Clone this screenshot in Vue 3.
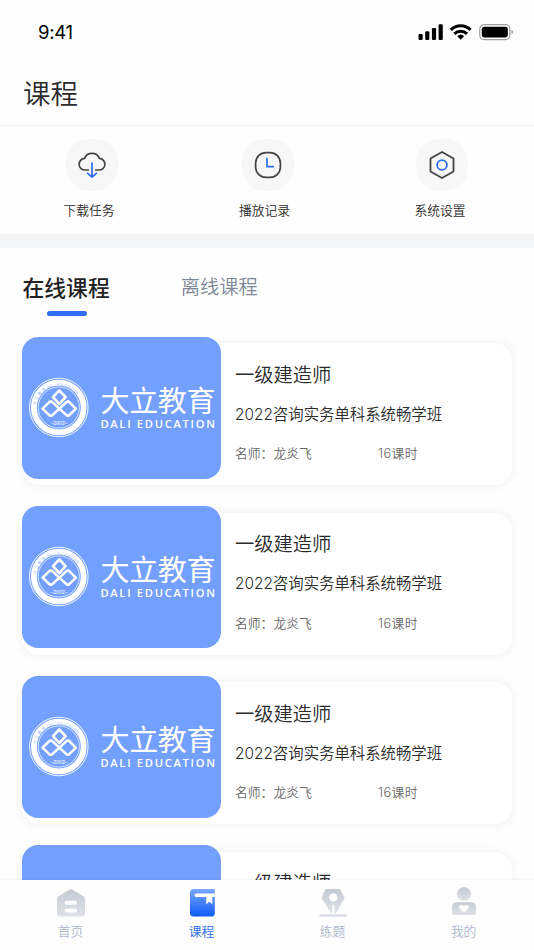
<script setup>
import { ref } from 'vue';

const activeTab = ref('online');
const activeNav = ref('course');

const actions = [
  { key: 'download', label: '下载任务' },
  { key: 'history', label: '播放记录' },
  { key: 'settings', label: '系统设置' },
];

const tabs = [
  { key: 'online', label: '在线课程' },
  { key: 'offline', label: '离线课程' },
];

const courses = Array.from({ length: 4 }, (_, i) => ({
  id: i + 1,
  title: '一级建造师',
  name: '2022咨询实务单科系统畅学班',
  teacher: '龙炎飞',
  hours: 16,
}));

const navItems = [
  { key: 'home', label: '首页' },
  { key: 'course', label: '课程' },
  { key: 'practice', label: '练题' },
  { key: 'mine', label: '我的' },
];
</script>

<template>
  <div class="page">
    <div class="status-bar">
      <span class="time">9:41</span>
      <svg class="status-icons" width="96" height="18" viewBox="0 0 96 18">
        <rect x="0.5" y="11" width="4.2" height="6" rx="1.2" />
        <rect x="7.2" y="8.3" width="4.2" height="8.7" rx="1.2" />
        <rect x="13.9" y="5" width="4.2" height="12" rx="1.2" />
        <rect x="20.6" y="1.3" width="4.2" height="15.7" rx="1.2" />
        <g fill="none" stroke="#000" stroke-width="3.1">
          <path d="M32.8 6.9a14 14 0 0 1 19.8 0" />
          <path d="M36.4 10.8a9 9 0 0 1 12.6 0" />
        </g>
        <path d="M39.3 13.2a5 5 0 0 1 6.8 0l-3.4 3.5z" />
        <rect x="61.8" y="1.7" width="30" height="14.9" rx="4.3" fill="none" stroke="#a0a0a0" stroke-width="1.2" />
        <rect x="63.8" y="3.8" width="26" height="10.6" rx="2.4" />
        <path d="M93.4 6.8c2.3.8 2.3 3.9 0 4.7z" fill="#a0a0a0" />
      </svg>
    </div>

    <header class="header">
      <h1>课程</h1>
    </header>

    <section class="actions">
      <div v-for="item in actions" :key="item.key" class="action" :class="item.key">
        <div class="action-icon">
          <svg v-if="item.key === 'download'" width="30" height="30" viewBox="0 0 30 30" fill="none" stroke-width="1.7" stroke-linecap="round" stroke-linejoin="round">
            <path d="M11.3 20H8.2A5.6 5.6 0 0 1 7.6 8.4A8 8 0 0 1 22.4 8.4A5.6 5.6 0 0 1 21.8 20H18.7" stroke="#444" />
            <path d="M15 13V27M10.6 23.3L15 27l4.4-3.7" stroke="#2f6cf6" />
          </svg>
          <svg v-else-if="item.key === 'history'" width="30" height="30" viewBox="0 0 30 30" fill="none" stroke-width="1.7">
            <rect x="2.6" y="2.6" width="24.8" height="24.8" rx="10.5" stroke="#444" />
            <path d="M14 7.8V16.7H21" stroke="#2f6cf6" />
          </svg>
          <svg v-else width="30" height="30" viewBox="0 0 30 30" fill="none" stroke-width="1.8" stroke-linejoin="round">
            <path d="M15 2L26.5 8.5V21.5L15 28L3.5 21.5V8.5Z" stroke="#444" />
            <circle cx="15" cy="15" r="4.9" stroke="#2f6cf6" />
          </svg>
        </div>
        <span class="action-label">{{ item.label }}</span>
      </div>
    </section>

    <div class="divider"></div>

    <div class="tabs">
      <div
        v-for="tab in tabs"
        :key="tab.key"
        class="tab"
        :class="{ active: activeTab === tab.key }"
        @click="activeTab = tab.key"
      >
        {{ tab.label }}
      </div>
    </div>

    <main class="course-list">
      <article v-for="course in courses" :key="course.id" class="course-card">
        <div class="cover">
          <svg width="198" height="142" viewBox="0 0 198 142">
            <g fill="none" stroke="#fff">
              <circle cx="36.8" cy="70.5" r="29.3" stroke-width="0.9" />
              <circle cx="36.8" cy="70.5" r="24.9" stroke-width="5.8" />
              <circle cx="36.8" cy="70.5" r="20.6" stroke-width="0.7" />
              <g stroke-width="2.6" stroke-linejoin="round">
                <path d="M37.3 53.5L43.6 60.2L37.3 67L31 60.2Z" />
                <path d="M37.3 71.6L29.8 64.6H27.8L20.6 71.6L27.8 78.6H29.8L45 64.6H46.8L53.8 71.6L46.8 78.6H45Z" />
              </g>
            </g>
            <path id="seal-arc" d="M13.4 72.5A23.4 23.4 0 1 1 60.2 72.5" fill="none" />
            <text class="seal-text"><textPath href="#seal-arc" startOffset="4">大 立 教 育 DALI EDUCATION</textPath></text>
            <text class="seal-year" x="37" y="87.8" text-anchor="middle">–2002–</text>
            <text class="brand" x="78.5" y="74.7" textLength="115">大立教育</text>
            <text class="brand-en" x="78.4" y="91.3" textLength="114.5">DALI EDUCATION</text>
          </svg>
        </div>
        <div class="info">
          <h2>{{ course.title }}</h2>
          <p class="name">{{ course.name }}</p>
          <div class="meta">
            <span class="teacher">名师：{{ course.teacher }}</span>
            <span class="hours">{{ course.hours }}课时</span>
          </div>
        </div>
      </article>
    </main>

    <nav class="nav">
      <svg class="defs" width="0" height="0">
        <defs>
          <linearGradient id="nav-gray" x1="0" y1="0" x2="0" y2="1">
            <stop offset="0" stop-color="#c4cad5" />
            <stop offset="1" stop-color="#dee1e6" />
          </linearGradient>
          <linearGradient id="nav-blue" x1="0" y1="0" x2="0" y2="1">
            <stop offset="0" stop-color="#7ba6ff" />
            <stop offset="1" stop-color="#0f5cf6" />
          </linearGradient>
        </defs>
      </svg>
      <div
        v-for="item in navItems"
        :key="item.key"
        class="nav-item"
        :class="{ active: activeNav === item.key }"
        @click="activeNav = item.key"
      >
        <svg width="30" height="32" viewBox="0 0 30 32">
          <template v-if="item.key === 'home'">
            <path d="M13.2 2.7Q15 1.6 16.8 2.7L27.4 9.2Q29 10.3 29 12V26Q29 29.5 25.5 29.5H4.5Q1 29.5 1 26V12Q1 10.3 2.6 9.2Z" fill="url(#nav-gray)" />
            <rect x="8.6" y="13.7" width="12.4" height="4" rx="2" fill="#fff" />
            <rect x="8.6" y="21.6" width="12.4" height="4" rx="2" fill="#fff" />
          </template>
          <template v-else-if="item.key === 'course'">
            <path d="M6.5 2H27.8V27Q27.6 29 25.3 29.5H6.5Q3 29.5 3 26V5.5Q3 2 6.5 2Z" fill="url(#nav-blue)" />
            <path d="M9.2 6.5H27.8V9.9H25.4V17.2L22.3 14.8L19.2 17.2V9.9H9.2A1.7 1.7 0 0 1 9.2 6.5Z" fill="#fff" />
          </template>
          <template v-else-if="item.key === 'practice'">
            <path d="M8.5 2H22L26.7 11L18.3 25.5Q17.8 26.3 16.4 26.3V17.8H14.2V26.3Q13.2 26.3 12.6 25.5L3.6 11L7 3Q7.5 2 8.5 2Z" fill="url(#nav-gray)" />
            <circle cx="15.3" cy="10.6" r="4" fill="#fff" />
            <rect x="1.3" y="27.3" width="27.8" height="2.4" rx="1.2" fill="#dadee4" />
          </template>
          <template v-else>
            <circle cx="15" cy="7" r="7" fill="url(#nav-gray)" />
            <path d="M8.5 15.2H21.5Q27 15.2 27 20.5V25.5Q27 28 24.5 28H5.5Q3 28 3 25.5V20.5Q3 15.2 8.5 15.2Z" fill="url(#nav-gray)" />
            <path d="M15 25.8L10.6 21.6C8.8 19.5 11.8 16 15 19.3C18.2 16 21.2 19.5 19.4 21.6Z" fill="#fff" />
          </template>
        </svg>
        <span>{{ item.label }}</span>
      </div>
    </nav>
  </div>
</template>

<style>
body {
  margin: 0;
  background: #fff;
}
</style>

<style scoped>
.page {
  display: flex;
  flex-direction: column;
  width: 534px;
  height: 950px;
  overflow: hidden;
  background: #fefefe;
  color: #2b2b2b;
  font-family: Inter, "Noto Sans CJK SC DemiLight", "Noto Sans CJK SC", sans-serif;
  font-weight: 350;
}
h1,
h2,
p {
  margin: 0;
  font-weight: 350;
}
.status-bar {
  display: flex;
  flex: none;
  align-items: center;
  justify-content: space-between;
  height: 64px;
  padding: 0 20px 0 38px;
  box-sizing: border-box;
}
.time {
  color: #000;
  font-size: 18.5px;
  font-weight: 400;
  letter-spacing: -0.3px;
}
.header {
  flex: none;
  height: 61px;
  padding-left: 23px;
  border-bottom: 1px solid #f3f3f3;
}
h1 {
  font-size: 27.5px;
  line-height: 60px;
}
.actions {
  display: flex;
  flex: none;
  gap: 105.5px;
  height: 108px;
  padding: 13px 0 0 54px;
  box-sizing: border-box;
}
.action {
  display: flex;
  flex-direction: column;
  align-items: center;
  width: 70px;
}
.action-icon {
  display: flex;
  align-items: center;
  justify-content: center;
  width: 52px;
  height: 52px;
  margin-left: 5px;
  border-radius: 23px;
  background: #f7f7f7;
}
.history .action-icon {
  margin-left: 7px;
}
.settings .action-icon {
  margin-left: 4px;
}
.action-label {
  margin-top: 10px;
  font-size: 12.8px;
  line-height: 19px;
}
.divider {
  flex: none;
  height: 14px;
  background: #f4f5f6;
}
.tabs {
  display: flex;
  flex: none;
  align-items: center;
  gap: 71px;
  height: 77px;
  padding-left: 22.5px;
}
.tab {
  position: relative;
  color: #7d8797;
  font-size: 19.3px;
  line-height: 40px;
}
.tab.active {
  color: #222;
  font-family: "Noto Sans CJK SC", sans-serif;
  font-size: 21.8px;
  font-weight: 500;
}
.tab.active::after {
  content: '';
  position: absolute;
  left: 24px;
  bottom: -9.5px;
  width: 40px;
  height: 5.5px;
  border-radius: 3px;
  background: #2f6ff5;
}
.course-list {
  display: flex;
  flex: 1;
  flex-direction: column;
  gap: 27.5px;
  min-height: 0;
  padding: 18px 22px 0;
  overflow: hidden;
}
.course-card {
  display: flex;
  flex: none;
  height: 142px;
  border-radius: 17px;
  background: #fff;
  box-shadow: 0 0 10px rgba(0, 0, 0, 0.07);
}
.cover {
  flex: none;
  width: 198.5px;
  height: 142px;
  margin-top: -6.5px;
  border-radius: 16px;
  background: #73a0ff;
}
.cover svg {
  display: block;
}
.cover text {
  fill: #fff;
}
.cover .brand {
  font-family: "Noto Sans CJK SC", sans-serif;
  font-size: 29px;
  font-weight: 400;
}
.cover .brand-en {
  font-family: "Open Sans", sans-serif;
  font-size: 11.2px;
  font-weight: 600;
}
.cover .seal-text {
  fill: #8fb2fb;
  font-size: 4px;
}
.cover .seal-year {
  font-size: 4.5px;
  font-weight: 500;
}
.info {
  padding: 16.8px 0 0 14.5px;
}
h2 {
  font-size: 19.3px;
  line-height: 30px;
}
.name {
  margin-top: 13px;
  font-size: 15.4px;
  line-height: 24px;
}
.meta {
  display: flex;
  margin-top: 17.5px;
  color: #686868;
  font-size: 12.8px;
  line-height: 20px;
}
.teacher {
  width: 143px;
}
.hours {
  letter-spacing: 0.4px;
}
.nav {
  position: relative;
  display: flex;
  flex: none;
  height: 70px;
  padding: 0 5px;
  background: #fefefe;
  box-shadow: 0 0 3px rgba(0, 0, 0, 0.09);
}
.defs {
  position: absolute;
}
.nav-item {
  display: flex;
  flex: 1;
  flex-direction: column;
  align-items: center;
  padding-top: 7px;
  color: #adb7cc;
  font-size: 12.8px;
  line-height: 20px;
}
.nav-item span {
  margin-top: 2.5px;
}
.nav-item.active {
  color: #2a6bf5;
  font-weight: 400;
}
</style>
